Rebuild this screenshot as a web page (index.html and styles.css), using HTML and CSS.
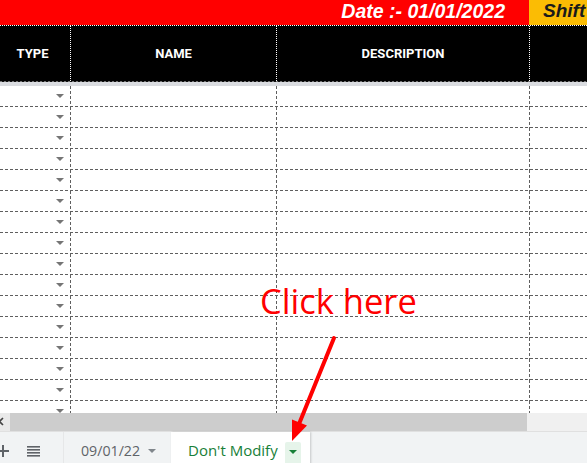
FILE: index.html
```html
<!DOCTYPE html>
<html>
<head>
<meta charset="utf-8">
<link rel="stylesheet" href="styles.css">
</head>
<body>
<div class="page">
  <div class="title-row">
    <div class="date-cell">Date :- 01/01/2022</div>
    <div class="shift-cell">Shift</div>
  </div>
  <div class="header-row">
    <div class="hcell type">TYPE</div>
    <div class="hcell">NAME</div>
    <div class="hcell">DESCRIPTION</div>
    <div class="hcell last"></div>
  </div>
  <div class="freeze"></div>
  <div class="rows">
    <div class="row"><div class="cell dd-cell"><span class="dd"></span></div><div class="cell"></div><div class="cell"></div><div class="cell last"></div></div>
    <div class="row"><div class="cell dd-cell"><span class="dd"></span></div><div class="cell"></div><div class="cell"></div><div class="cell last"></div></div>
    <div class="row"><div class="cell dd-cell"><span class="dd"></span></div><div class="cell"></div><div class="cell"></div><div class="cell last"></div></div>
    <div class="row"><div class="cell dd-cell"><span class="dd"></span></div><div class="cell"></div><div class="cell"></div><div class="cell last"></div></div>
    <div class="row"><div class="cell dd-cell"><span class="dd"></span></div><div class="cell"></div><div class="cell"></div><div class="cell last"></div></div>
    <div class="row"><div class="cell dd-cell"><span class="dd"></span></div><div class="cell"></div><div class="cell"></div><div class="cell last"></div></div>
    <div class="row"><div class="cell dd-cell"><span class="dd"></span></div><div class="cell"></div><div class="cell"></div><div class="cell last"></div></div>
    <div class="row"><div class="cell dd-cell"><span class="dd"></span></div><div class="cell"></div><div class="cell"></div><div class="cell last"></div></div>
    <div class="row"><div class="cell dd-cell"><span class="dd"></span></div><div class="cell"></div><div class="cell"></div><div class="cell last"></div></div>
    <div class="row"><div class="cell dd-cell"><span class="dd"></span></div><div class="cell"></div><div class="cell"></div><div class="cell last"></div></div>
    <div class="row"><div class="cell dd-cell"><span class="dd"></span></div><div class="cell"></div><div class="cell"></div><div class="cell last"></div></div>
    <div class="row"><div class="cell dd-cell"><span class="dd"></span></div><div class="cell"></div><div class="cell"></div><div class="cell last"></div></div>
    <div class="row"><div class="cell dd-cell"><span class="dd"></span></div><div class="cell"></div><div class="cell"></div><div class="cell last"></div></div>
    <div class="row"><div class="cell dd-cell"><span class="dd"></span></div><div class="cell"></div><div class="cell"></div><div class="cell last"></div></div>
    <div class="row"><div class="cell dd-cell"><span class="dd"></span></div><div class="cell"></div><div class="cell"></div><div class="cell last"></div></div>
    <div class="row"><div class="cell dd-cell"><span class="dd"></span></div><div class="cell"></div><div class="cell"></div><div class="cell last"></div></div>
  </div>
  <div class="hscroll">
    <div class="scroll-btn">
      <svg width="10" height="18" viewBox="0 0 10 18"><path d="M-4 5 L3 12 M3 5 L-4 12" stroke="#444" stroke-width="1.6" fill="none"/></svg>
    </div>
    <div class="thumb"></div>
    <div class="track"></div>
  </div>
  <div class="tabbar">
    <div class="icon-btn add">
      <svg width="14" height="14" viewBox="0 0 14 14"><path d="M7 1 V13 M1 7 H13" stroke="#5f6368" stroke-width="2" fill="none"/></svg>
    </div>
    <div class="icon-btn list">
      <svg width="13" height="11" viewBox="0 0 13 11"><rect x="0" y="0" width="13" height="1.6" fill="#5f6368"/><rect x="0" y="3" width="13" height="1.6" fill="#5f6368"/><rect x="0" y="6" width="13" height="1.6" fill="#5f6368"/><rect x="0" y="9" width="13" height="1.6" fill="#5f6368"/></svg>
    </div>
    <div class="tab">09/01/22<span class="tri gray"></span></div>
    <div class="tab active">Don't Modify<span class="dd-box"><span class="tri green"></span></span></div>
  </div>
  <div class="annot">Click here</div>
  <svg class="arrow" width="587" height="463" viewBox="0 0 587 463">
    <line x1="334" y1="338" x2="299" y2="424" stroke="#ff0000" stroke-width="4" stroke-linecap="round"/>
    <polygon points="292,441 307,425.5 292,419.5" fill="#ff0000"/>
  </svg>
</div>
</body>
</html>
```

FILE: styles.css
```css
* { box-sizing: border-box; }
html, body { margin: 0; padding: 0; background: #fff; }
.page {
  position: relative;
  width: 587px;
  height: 463px;
  overflow: hidden;
  display: flex;
  flex-direction: column;
  font-family: Roboto, "Liberation Sans", sans-serif;
}
.title-row {
  display: grid;
  grid-template-columns: 529px 58px;
  height: 25px;
  flex: none;
}
.date-cell {
  background: #ff0000;
  color: #fff;
  font-family: "Liberation Sans", Arial, sans-serif;
  font-weight: 700;
  font-style: italic;
  font-size: 19.5px;
  line-height: 22px;
  text-align: right;
  padding-right: 24px;
  white-space: nowrap;
}
.shift-cell {
  background: #fbbc04;
  color: #1a1a1a;
  font-family: "Liberation Sans", Arial, sans-serif;
  font-weight: 700;
  font-style: italic;
  font-size: 19px;
  line-height: 22px;
  padding-left: 14px;
  white-space: nowrap;
  overflow: hidden;
}
.header-row {
  display: grid;
  grid-template-columns: 71px 206px 253px 57px;
  height: 56px;
  flex: none;
  background: #000;
  border-top: 1px dotted #fff;
}
.hcell {
  display: flex;
  align-items: center;
  justify-content: center;
  color: #fff;
  font-weight: 700;
  font-size: 13px;
  border-right: 1px dotted #fff;
}
.hcell.type { padding-right: 5px; }
.hcell.last { border-right: none; }
.freeze {
  flex: none;
  height: 5px;
  background:
    repeating-linear-gradient(to right, #777 0 2px, #111 2px 4px) top / 100% 1px no-repeat,
    #dadce0;
}
.rows {
  flex: none;
  height: 327px;
  overflow: hidden;
}
.row {
  display: grid;
  grid-template-columns: 71px 206px 253px 57px;
  height: 21px;
  background: repeating-linear-gradient(to right, #5f5f5f 0 3px, transparent 3px 5px) bottom / 100% 1px no-repeat;
}
.cell {
  background: repeating-linear-gradient(to bottom, #5f5f5f 0 3px, transparent 3px 5px) right / 1px 100% no-repeat;
}
.cell.last { background: none; }
.dd-cell {
  display: flex;
  justify-content: flex-end;
  align-items: center;
  padding-right: 7px;
  padding-bottom: 1px;
}
.dd {
  width: 0;
  height: 0;
  border-left: 4px solid transparent;
  border-right: 4px solid transparent;
  border-top: 4px solid #757575;
}
.hscroll {
  flex: none;
  height: 18px;
  display: flex;
}
.scroll-btn {
  width: 10px;
  background: #e9e9e9;
  display: flex;
}
.thumb {
  width: 517px;
  background: #cdcdcd;
}
.track {
  flex: 1;
  background: #f0f0f0;
}
.tabbar {
  flex: none;
  height: 37px;
  display: flex;
  background: #f1f3f4;
  border-top: 1px solid #e0e0e0;
}
.icon-btn {
  display: flex;
  align-items: center;
  justify-content: center;
  padding-top: 2px;
}
.add { width: 14px; margin-left: -4px; }
.list { width: 13px; margin-left: 17px; padding-top: 3px; }
.tab {
  display: flex;
  align-items: center;
  padding-top: 0;
  font-family: "Open Sans", sans-serif;
  font-weight: 500;
  white-space: nowrap;
}
.tab:not(.active) {
  margin-left: 23px;
  width: 108px;
  padding-left: 17px;
  color: #5f6368;
  font-size: 14.2px;
  border-left: 1px solid #e6e7e8;
}
.tri {
  display: inline-block;
  width: 0;
  height: 0;
  border-left: 4px solid transparent;
  border-right: 4px solid transparent;
  border-top: 4px solid #80868b;
}
.tri.gray { margin-left: 8px; margin-top: 2px; }
.tri.green { border-top-color: #188038; }
.tab.active {
  width: 139px;
  padding-left: 17px;
  background: #fff;
  color: #188038;
  font-size: 15px;
  box-shadow: 1px 0 2px rgba(0,0,0,0.18);
}
.dd-box {
  display: flex;
  align-items: center;
  justify-content: center;
  width: 16px;
  height: 24px;
  margin-left: 7px;
  margin-top: 8px;
  padding-bottom: 4px;
  background: #e6f4ea;
  border-radius: 2px;
}
.annot {
  position: absolute;
  left: 260px;
  top: 284px;
  color: #ff0000;
  font-family: "Open Sans", sans-serif;
  font-size: 34.5px;
  line-height: 34.5px;
  white-space: nowrap;
}
.arrow {
  position: absolute;
  left: 0;
  top: 0;
  pointer-events: none;
}
```
